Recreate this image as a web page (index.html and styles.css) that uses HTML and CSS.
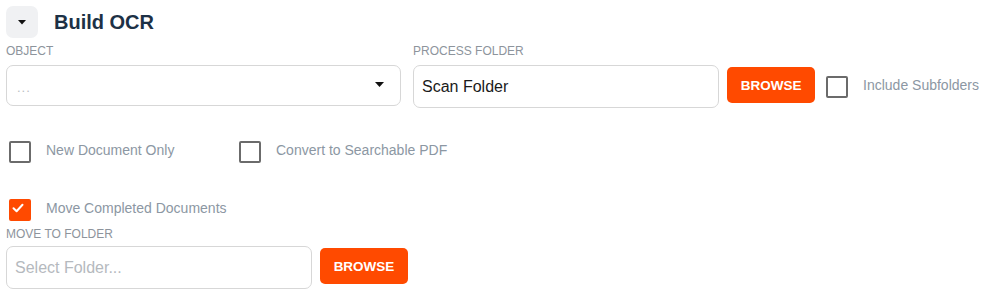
FILE: index.html
```html
<!DOCTYPE html>
<html>
<head>
<meta charset="utf-8">
<link rel="stylesheet" href="styles.css">
</head>
<body>
<div class="panel">
  <div class="header">
    <button class="toggle" type="button">
      <svg width="8" height="5" viewBox="0 0 8 5"><polygon points="0,0 8,0 4,4.5" fill="#111"/></svg>
    </button>
    <h1 class="title">Build OCR</h1>
  </div>

  <div class="row-top">
    <div class="field field-object">
      <div class="label">OBJECT</div>
      <div class="select">
        <span class="select-placeholder">...</span>
        <svg class="select-caret" width="9" height="5" viewBox="0 0 9 5"><polygon points="0,0 9,0 4.5,5" fill="#111"/></svg>
      </div>
    </div>
    <div class="field field-process">
      <div class="label">PROCESS FOLDER</div>
      <div class="input-line">
        <div class="input input-process"><span class="value">Scan Folder</span></div>
        <button class="browse" type="button">BROWSE</button>
        <label class="check check-inline">
          <span class="box"></span>
          <span class="check-text">Include Subfolders</span>
        </label>
      </div>
    </div>
  </div>

  <div class="row-checks">
    <label class="check check-wide">
      <span class="box"></span>
      <span class="check-text">New Document Only</span>
    </label>
    <label class="check">
      <span class="box"></span>
      <span class="check-text">Convert to Searchable PDF</span>
    </label>
  </div>

  <div class="row-move">
    <label class="check">
      <span class="box box-checked">
        <svg width="14" height="14" viewBox="0 0 14 14"><polyline points="2.5,7.2 5.6,10.2 11.5,3.8" fill="none" stroke="#fff" stroke-width="2" stroke-linecap="round" stroke-linejoin="round"/></svg>
      </span>
      <span class="check-text">Move Completed Documents</span>
    </label>
  </div>

  <div class="field field-move">
    <div class="label label-move">MOVE TO FOLDER</div>
    <div class="input-line">
      <div class="input input-move"><span class="placeholder">Select Folder...</span></div>
      <button class="browse" type="button">BROWSE</button>
    </div>
  </div>
</div>
</body>
</html>
```

FILE: styles.css
```css
* { box-sizing: border-box; }
body {
  margin: 0;
  background: #fff;
  font-family: "Liberation Sans", Arial, sans-serif;
  color: #1f2d3d;
}
.panel {
  padding: 6px;
}
.header {
  display: flex;
  align-items: center;
  height: 32px;
}
.toggle {
  width: 32px;
  height: 32px;
  border: none;
  border-radius: 7px;
  background: #f0f1f3;
  display: flex;
  align-items: center;
  justify-content: center;
  padding: 0;
  padding-top: 1px;
}
.title {
  margin: 0 0 0 16px;
  font-family: "Liberation Sans", Arial, sans-serif;
  font-size: 20px;
  font-weight: 700;
  color: #1d3146;
}
.row-top {
  display: flex;
  gap: 12px;
  margin-top: 6px;
}
.label {
  font-size: 12px;
  line-height: 14px;
  color: #8d949c;
  height: 14px;
  margin-bottom: 7px;
  white-space: nowrap;
}
.field-object { width: 396px; }
.select {
  height: 41px;
  border: 1px solid #d7d7d7;
  border-radius: 7px;
  display: flex;
  align-items: center;
  justify-content: space-between;
  padding: 4px 16px 0 10px;
}
.select-placeholder {
  font-size: 13px;
  color: #b9bdc2;
  letter-spacing: 1px;
}
.select-caret { margin-top: -6px; }
.input-line {
  display: flex;
  align-items: center;
}
.input {
  height: 43px;
  border: 1px solid #d7d7d7;
  border-radius: 7px;
  display: flex;
  align-items: center;
  padding: 0 8px;
  font-size: 16px;
}
.input-process { width: 306px; }
.value { color: #1a1a1a; }
.placeholder { color: #b5b9be; }
.browse {
  margin-left: 8px;
  width: 88px;
  height: 36px;
  border: none;
  border-radius: 5px;
  background: #ff4a00;
  color: #fff;
  font-family: "Liberation Sans", Arial, sans-serif;
  font-size: 13.5px;
  font-weight: 700;
  padding: 0;
  margin-top: -3px;
}
.check {
  display: flex;
  align-items: center;
  gap: 16px;
  height: 24px;
  white-space: nowrap;
}
.box {
  width: 24px;
  height: 24px;
  position: relative;
  flex: none;
}
.box::before {
  content: "";
  position: absolute;
  left: 3px;
  top: 3px;
  width: 18px;
  height: 18px;
  border: 2px solid #6b6b6b;
  border-radius: 2px;
}
.box-checked::before {
  background: #ff4a00;
  border-color: #ff4a00;
}
.box-checked svg {
  position: absolute;
  left: 5px;
  top: 5px;
}
.check-text {
  font-size: 14px;
  color: #8c97a3;
}
.check-inline { margin-left: 8px; margin-top: -4px; }
.row-checks {
  display: flex;
  margin-top: 30px;
}
.check-wide { width: 230px; }
.row-move {
  margin-top: 34px;
}
.field-move { margin-top: 7px; }
.label-move { margin-bottom: 5px; }
.input-move { width: 306px; }
```
